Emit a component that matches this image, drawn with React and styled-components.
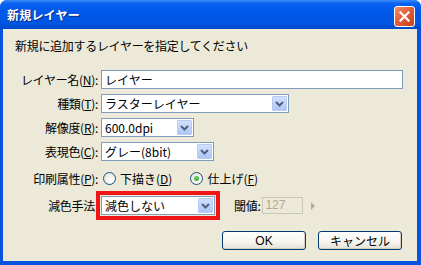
import React from "react";
import styled, { createGlobalStyle } from "styled-components";

const GlobalStyle = createGlobalStyle`
  html, body {
    margin: 0;
    padding: 0;
    background: #ffffff;
  }
  body {
    font-family: "Noto Sans CJK JP", "Liberation Sans", sans-serif;
    font-size: 12px;
  }
`;

const Window = styled.div`
  width: 421px;
  height: 265px;
  display: flex;
  flex-direction: column;
  background: #0853e0;
  border-radius: 7px 7px 0 0;
  box-sizing: border-box;
  overflow: hidden;
`;

const TitleBar = styled.div`
  height: 29px;
  flex: none;
  display: flex;
  align-items: center;
  justify-content: space-between;
  padding: 0 6px 0 7px;
  background: linear-gradient(
    to bottom,
    #3d8cf8 0%,
    #0a62f2 12%,
    #0058ea 40%,
    #0056e4 80%,
    #0048c8 100%
  );
`;

const TitleText = styled.span`
  color: #ffffff;
  font-weight: 700;
  font-size: 12px;
  letter-spacing: 0.2px;
  text-shadow: 1px 1px 0 #0b2a86;
`;

const CloseButton = styled.div`
  width: 21px;
  height: 21px;
  box-sizing: border-box;
  border: 1px solid #ffffff;
  border-radius: 3px;
  background: linear-gradient(135deg, #f0926f 0%, #e25f3a 45%, #c9401d 100%);
  display: flex;
  align-items: center;
  justify-content: center;
  margin-top: 3px;
`;

const Body = styled.div`
  flex: 1;
  margin: 0 4px 4px 3px;
  background: #ece9d8;
  padding: 10px 0 0 12px;
  color: #000000;
`;

const Intro = styled.div`
  line-height: 14px;
  letter-spacing: -0.3px;
`;

const Form = styled.div`
  display: flex;
  flex-direction: column;
  margin-top: 17px;
`;

const Row = styled.div`
  display: flex;
  align-items: center;
  height: 19px;
  margin-top: ${(p) => p.$mt || 0}px;
`;

const Label = styled.span`
  width: 83px;
  flex: none;
  text-align: right;
  white-space: nowrap;
  letter-spacing: -0.3px;
  line-height: 14px;
`;

const TextInput = styled.div`
  width: ${(p) => p.$w}px;
  height: 19px;
  box-sizing: border-box;
  border: 1px solid #7f9db9;
  background: #ffffff;
  padding-left: 3px;
  display: flex;
  align-items: center;
  line-height: 14px;
  margin-left: 3px;
`;

const Select = styled(TextInput)`
  justify-content: space-between;
  padding-right: 1px;
  outline: ${(p) => (p.$mark ? "4px solid #f21515" : "none")};
  outline-offset: 1px;
`;

const DropButton = styled.div`
  width: 15px;
  height: 15px;
  box-sizing: border-box;
  border: 1px solid #b7cbf5;
  border-radius: 1px;
  background: linear-gradient(to bottom, #d2e0fd 0%, #bcd0f8 60%, #aec5f6 100%);
  display: flex;
  align-items: center;
  justify-content: center;
`;

const RadioGroup = styled.label`
  display: flex;
  align-items: center;
  gap: 4px;
  margin-left: ${(p) => p.$ml}px;
  white-space: nowrap;
  line-height: 14px;
`;

const RadioCircle = styled.span`
  width: 13px;
  height: 13px;
  box-sizing: border-box;
  border-radius: 50%;
  border: 1px solid #1c5180;
  background: radial-gradient(circle at 65% 65%, #ffffff 0%, #f4f3ee 40%, #dcdad0 100%);
  display: flex;
  align-items: center;
  justify-content: center;

  &::after {
    content: "";
    width: 5px;
    height: 5px;
    border-radius: 50%;
    background: ${(p) => (p.$checked ? "radial-gradient(circle at 35% 35%, #6fd06f, #21a121)" : "transparent")};
  }
`;

const SubLabel = styled.span`
  margin-left: 19px;
  line-height: 14px;
  letter-spacing: -0.3px;
`;

const DisabledInput = styled.div`
  width: 41px;
  height: 17px;
  box-sizing: border-box;
  border: 1px solid #c9c7ba;
  background: #ece9d8;
  color: #aca899;
  padding-left: 2px;
  margin-left: 2px;
  line-height: 15px;
  font-family: "Liberation Sans", sans-serif;
  font-size: 12px;
`;

const SpinArrow = styled.span`
  width: 0;
  height: 0;
  margin-left: 8px;
  border-top: 4px solid transparent;
  border-bottom: 4px solid transparent;
  border-left: 4px solid #b0ada0;
`;

const ButtonRow = styled.div`
  display: flex;
  justify-content: flex-end;
  gap: 12px;
  margin-top: 16px;
  padding-right: 15px;
`;

const Button = styled.div`
  width: 84px;
  height: 19px;
  box-sizing: border-box;
  border: 1px solid #003c74;
  border-radius: 3px;
  background: linear-gradient(to bottom, #ffffff 0%, #f5f4ef 60%, #e3e0d6 100%);
  box-shadow: inset -1px -1px 0 #d4d0c3;
  display: flex;
  align-items: center;
  justify-content: center;
  line-height: 14px;
  font-family: ${(p) => (p.$latin ? '"Liberation Sans", sans-serif' : "inherit")};
`;

const Chevron = () => (
  <svg width="9" height="6" viewBox="0 0 9 6">
    <path d="M1 1 L4.5 4.5 L8 1" fill="none" stroke="#4d6185" strokeWidth="2" />
  </svg>
);

const CloseX = () => (
  <svg width="11" height="11" viewBox="0 0 11 11">
    <path d="M1.5 1.5 L9.5 9.5 M9.5 1.5 L1.5 9.5" stroke="#ffffff" strokeWidth="2.2" strokeLinecap="square" />
  </svg>
);

const SelectBox = ({ width, value, mark }) => (
  <Select $w={width} $mark={mark}>
    <span>{value}</span>
    <DropButton>
      <Chevron />
    </DropButton>
  </Select>
);

export default function App() {
  return (
    <>
      <GlobalStyle />
      <Window>
        <TitleBar>
          <TitleText>新規レイヤー</TitleText>
          <CloseButton>
            <CloseX />
          </CloseButton>
        </TitleBar>
        <Body>
          <Intro>新規に追加するレイヤーを指定してください</Intro>
          <Form>
            <Row>
              <Label>
                レイヤー名(<u>N</u>):
              </Label>
              <TextInput $w={302}>レイヤー</TextInput>
            </Row>
            <Row $mt={5}>
              <Label>
                種類(<u>T</u>):
              </Label>
              <SelectBox width={188} value="ラスターレイヤー" />
            </Row>
            <Row $mt={5}>
              <Label>
                解像度(<u>R</u>):
              </Label>
              <SelectBox width={93} value="600.0dpi" />
            </Row>
            <Row $mt={5}>
              <Label>
                表現色(<u>C</u>):
              </Label>
              <SelectBox width={113} value="グレー(8bit)" />
            </Row>
            <Row $mt={8}>
              <Label>
                印刷属性(<u>P</u>):
              </Label>
              <RadioGroup $ml={5}>
                <RadioCircle />
                <span>
                  下描き(<u>D</u>)
                </span>
              </RadioGroup>
              <RadioGroup $ml={18}>
                <RadioCircle $checked />
                <span>
                  仕上げ(<u>F</u>)
                </span>
              </RadioGroup>
            </Row>
            <Row $mt={8}>
              <Label>減色手法:</Label>
              <SelectBox width={114} value="減色しない" mark />
              <SubLabel>閾値:</SubLabel>
              <DisabledInput>127</DisabledInput>
              <SpinArrow />
            </Row>
          </Form>
          <ButtonRow>
            <Button $latin>OK</Button>
            <Button>キャンセル</Button>
          </ButtonRow>
        </Body>
      </Window>
    </>
  );
}
